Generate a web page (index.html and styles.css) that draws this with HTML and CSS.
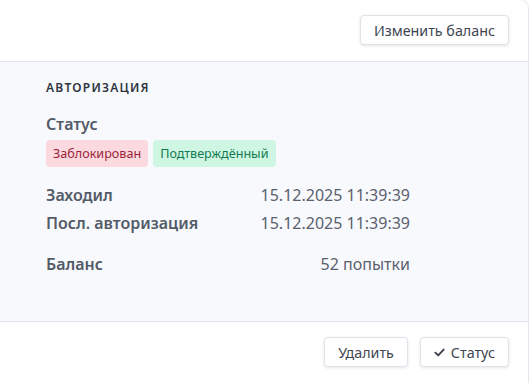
FILE: index.html
```html
<!DOCTYPE html>
<html>
  <head>
    <title>Авторизация</title>
    <link rel="stylesheet" href="styles.css">
  </head>
  <body>
    <div class="card">
      <div class="card-header">
        <button class="btn">Изменить баланс</button>
      </div>

      <div class="card-body">
        <h2 class="section-title">Авторизация</h2>

        <div class="status">
          <div class="label">Статус</div>
          <div class="badges">
            <span class="badge badge-danger">Заблокирован</span>
            <span class="badge badge-success">Подтверждённый</span>
          </div>
        </div>

        <div class="rows">
          <div class="row">
            <span class="label">Заходил</span>
            <span class="value">15.12.2025 11:39:39</span>
          </div>
          <div class="row">
            <span class="label">Посл. авторизация</span>
            <span class="value">15.12.2025 11:39:39</span>
          </div>
        </div>

        <div class="row balance">
          <span class="label">Баланс</span>
          <span class="value">52 попытки</span>
        </div>
      </div>

      <div class="card-footer">
        <button class="btn">Удалить</button>
        <button class="btn">
          <svg class="icon" viewBox="0 0 12 12" width="11" height="11">
            <path d="M1.5 6.2 L4.6 9.2 L10.5 2.8" fill="none" stroke="currentColor" stroke-width="2.1" stroke-linecap="round" stroke-linejoin="round" />
          </svg>
          Статус
        </button>
      </div>
    </div>
  </body>
</html>
```

FILE: styles.css
```css
body,
h2,
button {
  margin: 0;
  padding: 0;
  box-sizing: border-box;
}

body {
  background: #ffffff;
  font-family: "Noto Sans", "Open Sans", sans-serif;
  color: #4a5260;
  overflow: hidden;
}

/* Card */
.card {
  box-sizing: border-box;
  width: 530px;
  margin: -1px 0 0 -1px;
  border: 1px solid #e2e6ee;
  border-radius: 0 9px 0 0;
  background: #fff;
}

.card-header {
  display: flex;
  justify-content: flex-end;
  padding: 15px 19px 16px;
  border-bottom: 1px solid #dfe3ec;
}

.card-body {
  background: #f8f9fd;
  padding: 18px 118px 43px 46px;
}

.card-footer {
  display: flex;
  justify-content: flex-end;
  gap: 12px;
  padding: 15px 19px 30px;
  border-top: 1px solid #dfe3ec;
}

/* Buttons */
.btn {
  display: inline-flex;
  align-items: center;
  gap: 6px;
  height: 30px;
  padding: 0 13px;
  background: #fff;
  border: 1px solid #e0e3e9;
  border-radius: 4px;
  box-shadow: 0 1px 3px rgba(30, 40, 60, 0.12);
  font-family: inherit;
  font-size: 14.3px;
  color: #3f4652;
  cursor: pointer;
}

.icon {
  color: #3a404b;
}

/* Section */
.section-title {
  font-size: 12px;
  font-weight: 600;
  letter-spacing: 1.25px;
  text-transform: uppercase;
  color: #2f3540;
  line-height: 16px;
  margin-bottom: 18px;
}

.label {
  font-size: 16px;
  font-weight: 600;
  color: #535b68;
  line-height: 20px;
}

.status .label {
  margin-bottom: 6px;
}

.badges {
  display: flex;
  gap: 5px;
}

.badge {
  display: inline-block;
  padding: 0 7px;
  height: 27px;
  line-height: 27px;
  font-size: 12.6px;
  border-radius: 4px;
}

.badge-danger {
  background: #fcd9de;
  color: #9b1f3a;
}

.badge-success {
  background: #cff6e3;
  color: #127a51;
}

.rows {
  margin-top: 14px;
}

.row {
  display: flex;
  justify-content: space-between;
  align-items: center;
  height: 28px;
}

.value {
  font-size: 16px;
  color: #5a616d;
}

.balance {
  margin-top: 13px;
}
```
